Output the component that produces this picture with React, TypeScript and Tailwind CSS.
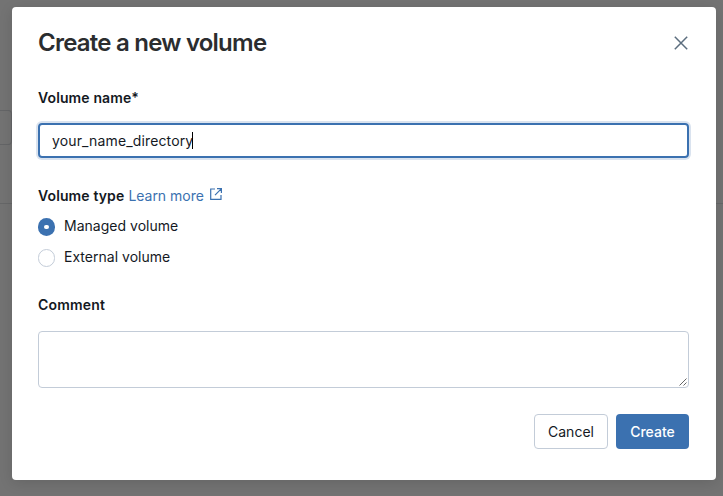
import React from "react";

function Radio({ checked, label }: { checked?: boolean; label: string }) {
  return (
    <label className="flex h-[31px] items-center">
      <span
        className={
          "mt-px flex h-[18px] w-[17px] items-center justify-center rounded-full " +
          (checked ? "bg-[#3b71b0]" : "border border-[#c3ccd8] bg-white")
        }
      >
        {checked && <span className="h-1 w-[5px] rounded-full bg-white" />}
      </span>
      <span className="mb-px ml-[9px] text-[14px] leading-5 tracking-[0.02px]">{label}</span>
    </label>
  );
}

function Backdrop() {
  return (
    <div className="absolute inset-0 flex flex-col bg-[#737373]">
      <div className="mt-[110px] h-[35px] w-3 rounded-r-[4px] border border-l-0 border-[#646567]" />
      <div className="mt-[58px] h-px w-full bg-[#666768]" />
    </div>
  );
}

export default function App() {
  return (
    <div className="relative h-[496px] w-[723px] overflow-hidden font-['Inter',sans-serif] text-[#14191f]">
      <Backdrop />
      <div className="relative flex h-full pt-[7px] pl-3">
        <section className="flex h-[473px] w-[704px] flex-col rounded-[4px] bg-white pr-[27px] pl-[26px] shadow-[0_3px_14px_rgba(0,0,0,0.12)]">
          <header className="flex h-[71px] items-center justify-between">
            <h1 className="text-[24px] leading-8 font-semibold tracking-[-0.77px] text-[#2b2d2f]">Create a new volume</h1>
            <svg className="mr-px" width="14" height="14" viewBox="0 0 14 14" fill="none" stroke="#5b6d7e" strokeWidth="1.5">
              <path d="M.8.8l12.4 12.4M13.2.8L.8 13.2" />
            </svg>
          </header>
          <div className="mt-[10px] text-[14px] leading-5 font-semibold tracking-[0.12px]">Volume name*</div>
          <div className="mt-[15px] flex h-[35px] shrink-0 items-center rounded-[4px] border-2 border-[#3b71b0] pl-3 shadow-[0_0_0_2px_#dae3ef]">
            <span className="text-[14px] leading-5 tracking-[0.14px]">your_name_directory</span>
            <span className="-ml-px h-[17px] w-px bg-black" />
          </div>
          <div className="mt-7 flex h-5 items-center text-[14px] leading-5">
            <span className="font-semibold tracking-[0.12px]">Volume type</span>
            <span className="ml-1 tracking-[-0.02px] text-[#3b71b0]">Learn more</span>
            <svg className="mb-[5px] ml-[6px]" width="12" height="12" viewBox="0 0 12 12" fill="none" stroke="#3b71b0" strokeWidth="1.2">
              <path d="M5 1H.7v10.3H11V7M7 .7h4.4V5M11.2.9L5 7.1" />
            </svg>
          </div>
          <div className="mt-[5px]">
            <Radio checked label="Managed volume" />
            <Radio label="External volume" />
          </div>
          <div className="mt-[22px] text-[14px] leading-5 font-semibold tracking-[0.2px]">Comment</div>
          <div className="mt-4 flex h-[57px] shrink-0 items-end justify-end rounded-[4px] border border-[#c3ccd8] pr-px pb-px">
            <svg width="8" height="8" viewBox="0 0 8 8" stroke="#555" strokeWidth=".9">
              <path d="M.5 7.5l7-7M4.5 7.5l3-3" />
            </svg>
          </div>
          <footer className="mt-[26px] flex justify-end gap-2 text-[14px]">
            <button className="h-[35px] w-[74px] rounded-[4px] border border-[#c3ccd8] bg-white">Cancel</button>
            <button className="h-[35px] w-[73px] rounded-[4px] bg-[#3b71b0] font-medium text-white">Create</button>
          </footer>
        </section>
      </div>
    </div>
  );
}
